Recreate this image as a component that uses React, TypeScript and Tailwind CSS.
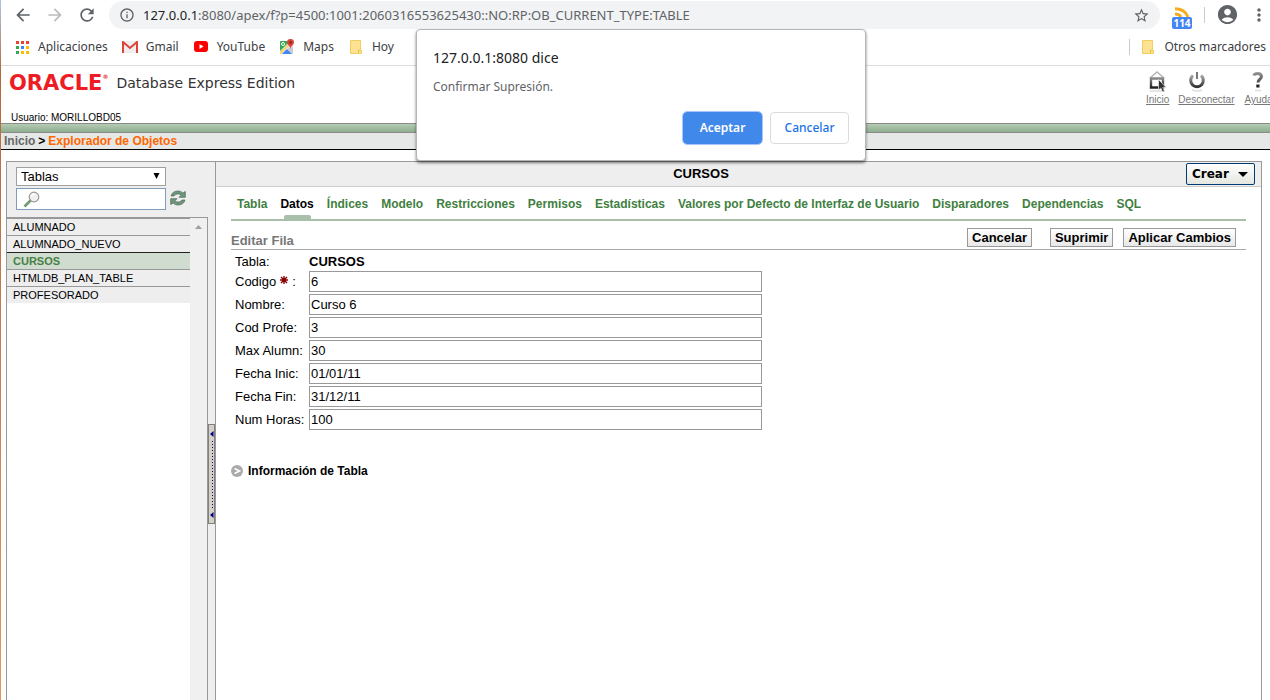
import React from "react";
import {
  MdStarBorder,
  MdAccountCircle,
  MdMoreVert,
  MdArrowBack,
  MdArrowForward,
  MdRefresh,
  MdInfoOutline,
} from "react-icons/md";

const objects = ["ALUMNADO", "ALUMNADO_NUEVO", "CURSOS", "HTMLDB_PLAN_TABLE", "PROFESORADO"];

const tabs = [
  "Tabla",
  "Datos",
  "Índices",
  "Modelo",
  "Restricciones",
  "Permisos",
  "Estadísticas",
  "Valores por Defecto de Interfaz de Usuario",
  "Disparadores",
  "Dependencias",
  "SQL",
];

const fields = [
  { id: "codigo", label: "Codigo", value: "6", required: true },
  { id: "nombre", label: "Nombre", value: "Curso 6", required: false },
  { id: "cod-profe", label: "Cod Profe", value: "3", required: false },
  { id: "max-alumn", label: "Max Alumn", value: "30", required: false },
  { id: "fecha-inic", label: "Fecha Inic", value: "01/01/11", required: false },
  { id: "fecha-fin", label: "Fecha Fin", value: "31/12/11", required: false },
  { id: "num-horas", label: "Num Horas", value: "100", required: false },
];

const appColors = ["#ea4335", "#ea4335", "#ea4335", "#34a853", "#4285f4", "#fbbc04", "#34a853", "#fbbc04", "#fbbc04"];

function AppsIcon() {
  return (
    <svg width="13" height="13" viewBox="0 0 13 13" aria-hidden="true">
      {appColors.map((c, i) => (
        <rect key={i} x={(i % 3) * 5} y={Math.floor(i / 3) * 5} width="3" height="3" fill={c} />
      ))}
    </svg>
  );
}

function GmailIcon() {
  return (
    <svg width="16" height="12" viewBox="0 0 16 12" aria-hidden="true">
      <path d="M1 0h14v12H1z" fill="#eee" />
      <path d="M1 12V1l7 6 7-6v11" fill="none" stroke="#db4437" strokeWidth="2" />
    </svg>
  );
}

function YouTubeIcon() {
  return (
    <svg width="16" height="12" viewBox="0 0 16 12" aria-hidden="true">
      <rect x="1" width="14" height="11" rx="3" fill="#f00" />
      <path d="M6.500 3v5l4-2.500z" fill="#fff" />
    </svg>
  );
}

function MapsIcon() {
  return (
    <svg width="16" height="16" viewBox="0 0 16 16" aria-hidden="true">
      <rect x="1" y="2" width="13" height="13" rx="1" fill="#dfe1e5" />
      <path d="M1 3q0-1 1-1h9L1 12z" fill="#34a853" />
      <path d="M3 15l5-5 5 5z" fill="#4285f4" />
      <path d="M1 13L12 2l1 1L2 15q-1 0-1-1z" fill="#fbd65a" />
      <path d="M8 10l6 5V8z" fill="#c9cdd2" />
      <circle cx="4" cy="5" r="1.500" fill="none" stroke="#fff" />
      <path d="M11.500 0A3.500 3.500 0 0 0 8 3.600C8 6 11 6.500 11.500 10 12 6.500 15 6 15 3.600A3.500 3.500 0 0 0 11.500 0z" fill="#db4437" />
      <circle cx="11.500" cy="3.500" r="1.200" fill="#7b231c" />
    </svg>
  );
}

function FolderIcon() {
  return (
    <svg width="12" height="14" viewBox="0 0 12 14" aria-hidden="true">
      <path d="M.5.5h10v9l1 1v3H.5z" fill="#fde293" stroke="#f0ce60" />
      <path d="M8.500 13v-3h2.500" fill="none" stroke="#e8c14b" />
    </svg>
  );
}

function FeedIcon() {
  return (
    <svg width="16" height="10" viewBox="0 0 16 10" aria-hidden="true">
      <path d="M1 1.800C7 1.800 12 5 14 10" fill="none" stroke="#f9ab1f" strokeWidth="3" />
      <path d="M1 7c3 0 5 1 6 3" fill="none" stroke="#f9ab1f" strokeWidth="3" />
    </svg>
  );
}

function HomeIcon() {
  return (
    <svg width="22" height="24" viewBox="0 0 22 24" aria-hidden="true">
      <defs>
        <linearGradient id="home-ink" x1="0" y1="0" x2="0" y2="1">
          <stop offset="0" stopColor="#888" />
          <stop offset="1" stopColor="#222" />
        </linearGradient>
      </defs>
      <path d="M4 8L11 2l7 6" fill="none" stroke="#b5b5b5" strokeWidth="1.500" />
      <path d="M5 8.500h12v9H5z" fill="#fff" stroke="url(#home-ink)" strokeWidth="2.400" />
      <path d="M4 21h13" stroke="#ddd" strokeWidth="1.500" />
      <path d="M12.500 9.500v10.500l2.300-2 1.800 4 1.900-.8-1.700-3.900h3.200z" fill="#333" stroke="#eee" strokeWidth=".7" />
    </svg>
  );
}

function PowerIcon() {
  return (
    <svg width="22" height="24" viewBox="0 0 22 24" aria-hidden="true">
      <defs>
        <linearGradient id="power-ink" x1="0" y1="0" x2="0" y2="1">
          <stop offset="0" stopColor="#aaa" />
          <stop offset="1" stopColor="#333" />
        </linearGradient>
      </defs>
      <path d="M7 5.500a6.300 6.300 0 1 0 8 0" fill="none" stroke="url(#power-ink)" strokeWidth="3" />
      <path d="M10 2h2v7h-2z" fill="#777" />
      <path d="M6 20q5 2 10 0" fill="none" stroke="#ddd" strokeWidth="1.500" />
    </svg>
  );
}

function HelpIcon() {
  return (
    <svg width="22" height="24" viewBox="0 0 22 24" aria-hidden="true">
      <defs>
        <linearGradient id="help-ink" gradientUnits="userSpaceOnUse" x1="0" y1="2" x2="0" y2="18">
          <stop offset="0" stopColor="#999" />
          <stop offset="1" stopColor="#222" />
        </linearGradient>
      </defs>
      <path d="M9 5.500q.5-2 3.800-2t3.700 3c0 2.500-3.500 3-3.500 6" fill="none" stroke="url(#help-ink)" strokeWidth="3" />
      <path d="M11.300 14.500h3.200v3h-3.200z" fill="#222" />
      <path d="M10 20.500h6" stroke="#ddd" strokeWidth="1.500" />
    </svg>
  );
}

function MagnifierIcon() {
  return (
    <svg width="18" height="17" viewBox="0 0 18 17" aria-hidden="true">
      <path d="M1.500 15.500L8 9" stroke="#6f9a70" strokeWidth="2.600" />
      <circle cx="11" cy="6" r="4.800" fill="#f0f0f0" stroke="#999" strokeWidth="1.200" />
      <path d="M8.500 5.500a2.500 2.500 0 0 1 2.500-2.300" fill="none" stroke="#fff" strokeWidth="1.500" />
    </svg>
  );
}

function RefreshIcon() {
  return (
    <svg width="16" height="16" viewBox="0 0 16 16" aria-hidden="true">
      <g fill="#6f957a" stroke="#4c6a54" strokeWidth=".7">
        <path d="M1 6C2 2.500 4.500 1 8 1c2 0 3.500.7 4.800 2L15.300 1.500v5.800H9l2-2C10 4.300 9 4 8 4 6.500 4 5 4.500 4 6z" />
        <path d="M15 10C14 13.500 11.500 15 8 15c-2 0-3.500-.7-4.800-2L.7 14.500V8.700H7l-2 2c1 1 2 1.300 3 1.300 1.500 0 3-.5 4-2z" />
      </g>
    </svg>
  );
}

function Bookmark({ icon, children }: { icon: React.ReactNode; children: React.ReactNode }) {
  return (
    <a href="#" className="flex items-center gap-2">
      <span className="flex w-4 justify-center">{icon}</span>
      {children}
    </a>
  );
}

function BrowserChrome() {
  return (
    <header className="border-b border-[#dadce0] bg-white font-['Noto_Sans',sans-serif] text-[#3c4043]">
      <div className="flex h-[29px] items-center text-[#5f6368]">
        <div className="flex w-[108px] shrink-0 items-center gap-3 pl-3">
          <button aria-label="Atrás"><MdArrowBack size={20} /></button>
          <button aria-label="Adelante" className="text-[#babcbe]"><MdArrowForward size={20} /></button>
          <button aria-label="Recargar"><MdRefresh size={20} /></button>
        </div>
        <div className="mt-px flex h-7 min-w-0 flex-1 items-center gap-2 rounded-full bg-[#f1f3f4] px-2.5">
          <MdInfoOutline size={16} className="shrink-0" />
          <a href="#" className="min-w-0 flex-1 truncate text-[13px] leading-5">
            <span className="text-[#202124]">127.0.0.1</span>
            :8080/apex/f?p=4500:1001:2060316553625430::NO:RP:OB_CURRENT_TYPE:TABLE
          </a>
          <button aria-label="Añadir a marcadores"><MdStarBorder size={17} /></button>
        </div>
        <div className="flex w-[110px] shrink-0 items-center pl-3">
          <button className="mt-1.5 flex flex-col items-center">
            <FeedIcon />
            <span className="h-3 w-5 rounded-xs bg-[#4285f4] text-center text-[10px] leading-3 font-bold text-white">114</span>
          </button>
          <span className="ml-3 h-4 w-px bg-[#c8cacd]" />
          <button aria-label="Perfil" className="ml-[11px]"><MdAccountCircle size={23} /></button>
          <button aria-label="Menú" className="ml-2.5"><MdMoreVert size={20} /></button>
        </div>
      </div>
      <nav className="flex h-9 items-center gap-3.5 pr-1 pl-[13px] text-xs">
        <Bookmark icon={<AppsIcon />}>Aplicaciones</Bookmark>
        <Bookmark icon={<GmailIcon />}>Gmail</Bookmark>
        <Bookmark icon={<YouTubeIcon />}>YouTube</Bookmark>
        <Bookmark icon={<MapsIcon />}>Maps</Bookmark>
        <Bookmark icon={<FolderIcon />}>Hoy</Bookmark>
        <span className="flex-1" />
        <div className="flex items-center gap-2.5">
          <span className="h-4 w-px bg-[#c8cacd]" />
          <Bookmark icon={<FolderIcon />}>Otros marcadores</Bookmark>
        </div>
      </nav>
    </header>
  );
}

function ConfirmDialog() {
  return (
    <div
      role="dialog"
      aria-labelledby="dialog-title"
      className="absolute top-[29px] left-[416px] z-10 w-[450px] rounded-sm border border-[#b5b5b5] bg-white px-4 pt-[18px] pb-4 font-['Noto_Sans',sans-serif] shadow-[0_2px_3px_rgba(0,0,0,0.5)]"
    >
      <h2 id="dialog-title" className="text-sm leading-5 text-[#202124]">127.0.0.1:8080 dice</h2>
      <p className="mt-[11px] text-xs leading-4 text-[#5f6368]">Confirmar Supresión.</p>
      <div className="mt-[17px] flex justify-end gap-2 text-xs">
        <button className="h-8 w-[79px] rounded-sm bg-[#4088ea] font-semibold text-white outline outline-[#a5c7f7]">Aceptar</button>
        <button className="h-8 w-[79px] rounded-sm border border-[#dadce0] font-medium text-[#1a73e8]">Cancelar</button>
      </div>
    </div>
  );
}

function NavLink({ icon, children }: { icon: React.ReactNode; children: React.ReactNode }) {
  return (
    <a href="#" className="flex flex-col text-[10px] leading-3 text-[#777]">
      {icon}
      <span className="underline">{children}</span>
    </a>
  );
}

function PageHeader() {
  return (
    <>
      <div className="flex h-[57px] justify-between overflow-hidden pl-2">
        <div className="flex flex-col justify-between">
          <div className="flex items-center gap-2 pt-[5px]">
            <span className="flex items-start font-['DejaVu_Sans',sans-serif] text-[21px] leading-6 font-bold text-[#ee1c25]">
              ORACLE<span className="text-[6px] leading-3">®</span>
            </span>
            <span className="font-['DejaVu_Sans',sans-serif] text-sm text-[#333]">Database Express Edition</span>
          </div>
          <div className="pl-0.5 text-[10px] leading-[11px]">Usuario: MORILLOBD05</div>
        </div>
        <nav className="flex w-[124px] shrink-0 items-start gap-2.5 pt-1">
          <NavLink icon={<HomeIcon />}>Inicio</NavLink>
          <div className="-ml-px">
            <NavLink icon={<span className="pl-2"><PowerIcon /></span>}>Desconectar</NavLink>
          </div>
          <NavLink icon={<HelpIcon />}>Ayuda</NavLink>
        </nav>
      </div>
      <div className="h-2.5 border-y border-[#8b8b8b] bg-linear-to-b from-[#b4cbb4] to-[#8fae90]" />
      <nav className="flex h-[17px] items-center gap-[3px] border-b border-black bg-[#e5e8e6] pl-[3px] text-xs leading-4 font-bold">
        <a href="#" className="text-[#666]">Inicio</a>
        <span>&gt;</span>
        <span className="text-[#ff6600]">Explorador de Objetos</span>
      </nav>
    </>
  );
}

function ObjectList() {
  return (
    <aside className="flex w-[208px] shrink-0 flex-col bg-[#eee]">
      <div className="flex h-[55px] items-end gap-1 pb-[7px] pl-[9px]">
        <div className="flex w-[150px] flex-col gap-0.5">
          <div className="relative">
            <select
              aria-label="Tipo de objeto"
              className="block h-[19px] w-full appearance-none border border-[#a0a0a0] bg-white pl-1 text-[13px] leading-4"
            >
              <option>Tablas</option>
            </select>
            <svg className="pointer-events-none absolute top-1.5 right-1.5" width="7" height="6" viewBox="0 0 7 6" aria-hidden="true">
              <path d="M.5 0h6L3.500 6z" />
            </svg>
          </div>
          <div className="flex h-[22px] items-center border border-[#7f9db9] bg-white pl-1.5">
            <MagnifierIcon />
            <input aria-label="Buscar" className="min-w-0 flex-1 text-[13px] outline-none" />
          </div>
        </div>
        <button aria-label="Refrescar" className="mb-1"><RefreshIcon /></button>
      </div>
      <div className="flex flex-1">
        <div className="flex flex-1 border-t border-r border-[#999]">
          <ul className="flex-1 bg-white text-[11px]">
            {objects.map((name) => (
              <li
                key={name}
                className={
                  name === "CURSOS"
                    ? "h-[17px] border-t border-[#222] bg-[#d0dccf] pl-1.5 leading-4 font-bold text-[#478044]"
                    : "h-[17px] border-t border-[#999] bg-[#eee] pl-1.5 leading-4"
                }
              >
                <a href="#">{name}</a>
              </li>
            ))}
          </ul>
          <div className="flex w-[17px] justify-center bg-[#f0f0f0] pt-[7px]">
            <svg width="7" height="4" viewBox="0 0 7 4" aria-hidden="true">
              <path d="M0 4L3.500 0 7 4z" fill="#a0a0a0" />
            </svg>
          </div>
        </div>
        <div className="flex w-[7px] flex-col pt-[207px]">
          <button aria-label="Contraer panel" className="flex h-[100px] w-[7px] justify-end border border-[#808080] bg-[#d4d0c8]">
            <svg width="5" height="98" viewBox="0 0 5 98" aria-hidden="true">
              <path d="M4.500 6v6L1 9zM4.500 87v6L1 90z" fill="#000080" />
              <path d="M3.500 16v68" stroke="#000080" strokeDasharray="1 2" />
            </svg>
          </button>
        </div>
      </div>
    </aside>
  );
}

function ActionButton({ children }: { children: React.ReactNode }) {
  return (
    <button className="h-[19px] border border-[#999] bg-linear-to-b from-white to-[#e8e8e8] px-1 text-[13px] leading-4 font-bold">
      {children}
    </button>
  );
}

function RequiredMark() {
  return (
    <svg width="8" height="8" viewBox="0 0 8 8" className="mx-1 mb-1 inline-block" aria-hidden="true">
      <path d="M4 0v8M0 4h8M1 1l6 6M7 1L1 7" stroke="#8b0000" strokeWidth="1.400" />
    </svg>
  );
}

function DetailPanel() {
  return (
    <main className="flex min-w-0 flex-1 flex-col border-x border-[#999]">
      <div className="flex h-[25px] items-center border-b border-[#ccc] bg-[#eee] pr-1.5">
        <h1 className="flex-1 text-center text-[13px] font-bold">CURSOS</h1>
        <button className="flex h-[22px] w-[69px] items-center justify-between rounded-xs border border-[#003c74] bg-linear-to-b from-white to-[#e6e6e0] pr-1.5 pl-[5px] font-['DejaVu_Sans',sans-serif] text-xs font-bold">
          Crear
          <svg width="10" height="5" viewBox="0 0 10 5" aria-hidden="true">
            <path d="M0 0h10L5 5z" />
          </svg>
        </button>
      </div>
      <div className="px-[15px]">
        <nav className="flex h-[34px] gap-[13px] border-b-2 border-[#a9bfa9] pl-1.5 text-xs font-bold whitespace-nowrap text-[#3f7f3f]">
          {tabs.map((tab) =>
            tab === "Datos" ? (
              <a key={tab} href="#" className="flex flex-col items-center justify-between pt-[9px] leading-4 text-black">
                {tab}
                <span className="h-1 w-[27px] rounded-t-xs bg-[#a9bfa9]" />
              </a>
            ) : (
              <a key={tab} href="#" className="pt-[9px] leading-4">{tab}</a>
            ),
          )}
        </nav>
        <div className="flex h-[29px] items-end justify-between border-b border-[#aaa]">
          <h2 className="text-[13px] leading-4 font-bold text-[#777]">Editar Fila</h2>
          <div className="flex gap-2.5 pr-2.5 pb-0.5">
            <span className="mr-2 flex"><ActionButton>Cancelar</ActionButton></span>
            <ActionButton>Suprimir</ActionButton>
            <ActionButton>Aplicar Cambios</ActionButton>
          </div>
        </div>
        <form className="flex flex-col gap-0.5 pt-1 pl-1 text-[13px] leading-4">
          <div className="flex h-[15px]">
            <span className="w-[74px]">Tabla:</span>
            <b>CURSOS</b>
          </div>
          {fields.map((f) => (
            <div key={f.id} className="flex items-center">
              <label htmlFor={f.id} className="w-[74px] shrink-0 whitespace-nowrap">
                {f.label}
                {f.required && <RequiredMark />}:
              </label>
              <input id={f.id} defaultValue={f.value} className="h-[21px] w-[453px] border border-[#999] bg-white px-px outline-none" />
            </div>
          ))}
        </form>
        <button className="mt-[33px] flex items-center gap-[5px] text-xs leading-4 font-bold">
          <svg width="12" height="12" viewBox="0 0 12 12" aria-hidden="true">
            <circle cx="6" cy="6" r="6" fill="#aaa" />
            <path d="M3.500 3.500L8.500 6l-5 2.500" fill="none" stroke="#fff" strokeWidth="1.600" />
          </svg>
          Información de Tabla
        </button>
      </div>
    </main>
  );
}

export default function App() {
  return (
    <div className="relative flex min-h-screen overflow-hidden bg-white font-['Liberation_Sans',sans-serif] text-black">
      <div className="w-px shrink-0 bg-linear-to-b from-[#a8c8e8] via-[#b5683c] via-10% to-[#e8965a]" />
      <div className="flex min-w-0 flex-1 flex-col">
        <BrowserChrome />
        <PageHeader />
        <div className="mt-[11px] mr-2 ml-[5px] flex flex-1 border-t border-l border-[#999]">
          <ObjectList />
          <DetailPanel />
        </div>
      </div>
      <ConfirmDialog />
    </div>
  );
}
